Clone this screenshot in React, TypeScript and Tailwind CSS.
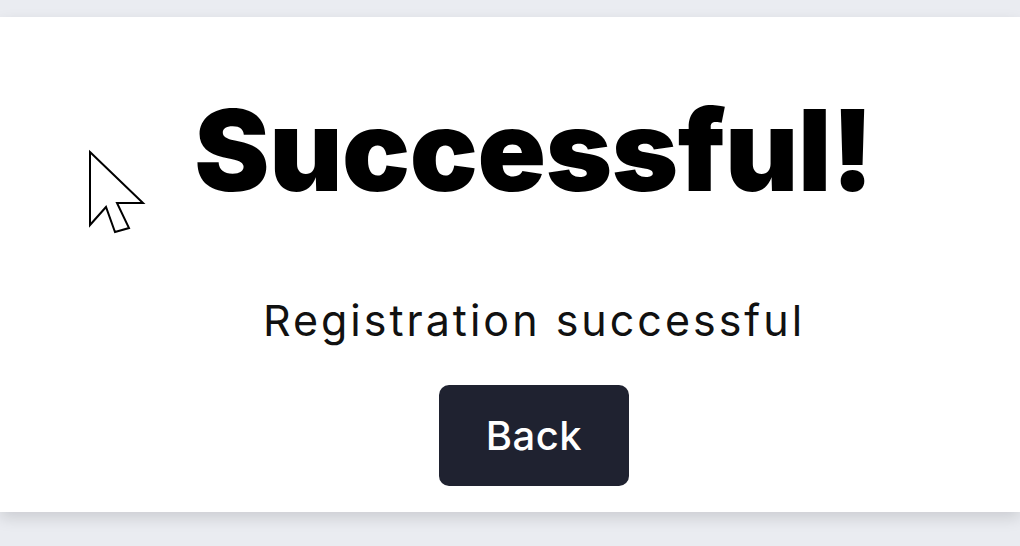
export default function App() {
  return (
    <div className="min-h-screen bg-[#eaecf1] pt-[17px]" style={{ fontFamily: 'Inter, "Noto Sans", sans-serif' }}>
      <div className="relative h-[495px] bg-white shadow-[0_6px_14px_rgba(0,0,0,0.13)] flex flex-col items-center pl-[48px]">
        <svg
          className="absolute left-[70px] top-[113px]"
          width="100"
          height="120"
          viewBox="0 0 100 120"
        >
          <polygon
            points="20,22 73,73 47,73 59,98 45,102 36,77 20,95"
            fill="white"
            stroke="black"
            strokeWidth="2"
            strokeLinejoin="miter"
          />
        </svg>
        <h1 className="mt-[77px] text-[113px] leading-none font-black text-black tracking-[-0.4px]">
          Successful!
        </h1>
        <p className="mt-[92px] text-[43px] leading-none font-normal text-[#111] tracking-[3px]">
          Registration successful
        </p>
        <button className="mt-[43px] w-[190px] h-[101px] rounded-[10px] bg-[#1f2230] text-white text-[40px] font-medium tracking-[0.5px]">
          Back
        </button>
      </div>
    </div>
  );
}
